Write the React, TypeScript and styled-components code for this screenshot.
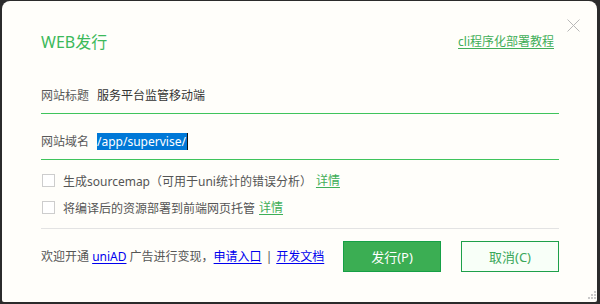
import React from 'react';
import styled, {createGlobalStyle} from 'styled-components';

const GlobalStyle = createGlobalStyle`
  html, body {
    margin: 0;
    padding: 0;
    background: #2b2b2b;
  }
  body {
    width: 600px;
    height: 304px;
    overflow: hidden;
    font-family: "Noto Sans", "Noto Sans CJK SC", sans-serif;
  }
`;

const checks = [
  {text: '生成sourcemap（可用于uni统计的错误分析）'},
  {text: '将编译后的资源部署到前端网页托管'},
];

export default function App() {
  return (
    <>
      <GlobalStyle />
      <Window>
        <CloseButton aria-label="关闭">
          <svg width="13" height="13" viewBox="0 0 13 13">
            <path d="M0.5 0.5 L12.5 12.5 M12.5 0.5 L0.5 12.5" stroke="#b8b8b8" strokeWidth="1" fill="none" />
          </svg>
        </CloseButton>

        <Header>
          <Title>WEB发行</Title>
          <GreenLink $inset>cli程序化部署教程</GreenLink>
        </Header>

        <Field>
          <Label>网站标题</Label>
          <Value>服务平台监管移动端</Value>
        </Field>
        <Field>
          <Label>网站域名</Label>
          <Value>
            <Selected>/app/supervise/</Selected>
          </Value>
        </Field>

        <Checks>
          {checks.map((c) => (
            <CheckRow key={c.text}>
              <Box />
              <CheckText>{c.text}</CheckText>
              <GreenLink $small>详情</GreenLink>
            </CheckRow>
          ))}
        </Checks>

        <Footer>
          <Promo>
            欢迎开通 <BlueLink>uniAD</BlueLink> 广告进行变现，<BlueLink>申请入口</BlueLink>
            <Pipe>|</Pipe>
            <BlueLink>开发文档</BlueLink>
          </Promo>
          <Buttons>
            <Button $primary>发行(P)</Button>
            <Button>取消(C)</Button>
          </Buttons>
        </Footer>

        <Grip width="10" height="10" viewBox="0 0 10 10">
          <rect x="8" y="0" width="2" height="2" fill="#c9c9c9" />
          <rect x="5" y="3" width="2" height="2" fill="#c9c9c9" />
          <rect x="8" y="3" width="2" height="2" fill="#c9c9c9" />
          <rect x="2" y="6" width="2" height="2" fill="#c9c9c9" />
          <rect x="5" y="6" width="2" height="2" fill="#c9c9c9" />
          <rect x="8" y="6" width="2" height="2" fill="#c9c9c9" />
        </Grip>
      </Window>
    </>
  );
}

const Window = styled.div`
  position: relative;
  box-sizing: border-box;
  margin: 1px 3px 0 2px;
  height: 301px;
  padding: 29px 38px 0 39px;
  background: #fffefa;
  border-radius: 8px 8px 2px 2px;
  display: flex;
  flex-direction: column;
`;

const CloseButton = styled.div`
  position: absolute;
  top: 18px;
  right: 17px;
  width: 13px;
  height: 13px;
  display: flex;
`;

const Header = styled.div`
  display: flex;
  align-items: center;
  justify-content: space-between;
  height: 24px;
  margin-bottom: 14px;
`;

const Title = styled.div`
  font-size: 16px;
  line-height: 24px;
  color: #3cb95a;
`;

const GreenLink = styled.span<{$small?: boolean; $inset?: boolean}>`
  font-size: 12px;
  line-height: 18px;
  color: #3fae58;
  text-decoration: underline;
  text-underline-offset: 2px;
  margin-left: ${(p) => (p.$small ? '4px' : '0')};
  margin-right: ${(p) => (p.$inset ? '5px' : '0')};
  cursor: pointer;
`;

const Field = styled.div`
  display: flex;
  align-items: center;
  gap: 8px;
  padding: 19px 0 9px;
  box-shadow: inset 0 -1px 0 #3fc45c;
  font-size: 12px;
  line-height: 18px;
`;

const Label = styled.span`
  color: #595959;
  width: 48px;
  white-space: nowrap;
`;

const Value = styled.span`
  color: #333;
`;

const Selected = styled.span`
  display: inline-block;
  background: #0078d7;
  color: #fff;
  padding-right: 1px;
  border-right: 1px solid #111;
  line-height: 17px;
`;

const Checks = styled.div`
  display: flex;
  flex-direction: column;
  padding-top: 7px;
`;

const CheckRow = styled.label`
  display: flex;
  align-items: center;
  height: 27px;
  font-size: 12px;
  color: #555;
`;

const Box = styled.span`
  box-sizing: border-box;
  width: 13px;
  height: 13px;
  margin-left: 1px;
  margin-right: 8px;
  border: 1px solid #cdcdcd;
  background: #fff;
`;

const CheckText = styled.span`
  white-space: nowrap;
`;

const Footer = styled.div`
  margin-top: 7px;
  border-top: 1px solid #e3e3e3;
  padding-top: 12px;
  display: flex;
  align-items: center;
  justify-content: space-between;
`;

const Promo = styled.div`
  font-size: 12px;
  line-height: 18px;
  color: #555;
  white-space: nowrap;
`;

const BlueLink = styled.span`
  color: #0000ee;
  text-decoration: underline;
  text-underline-offset: 2px;
`;

const Pipe = styled.span`
  margin: 0 4px;
  color: #555;
`;

const Buttons = styled.div`
  display: flex;
  gap: 20px;
`;

const Button = styled.div<{$primary?: boolean}>`
  box-sizing: border-box;
  width: 98px;
  height: 31px;
  display: flex;
  align-items: center;
  justify-content: center;
  font-size: 13px;
  border: 1px solid ${(p) => (p.$primary ? '#16a046' : '#1ea04a')};
  background: ${(p) => (p.$primary ? '#3bae53' : '#f8fff8')};
  color: ${(p) => (p.$primary ? '#fff' : '#3aa75a')};
`;

const Grip = styled.svg`
  position: absolute;
  right: 1px;
  bottom: 1px;
`;
